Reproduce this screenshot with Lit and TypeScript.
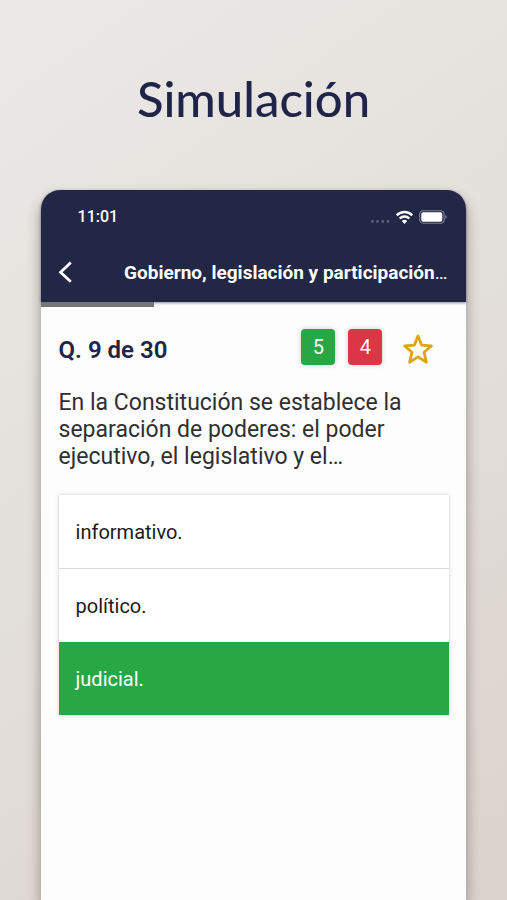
import { LitElement, html, css, svg } from "lit";
import { customElement, property, state } from "lit/decorators.js";
import { classMap } from "lit/directives/class-map.js";
import { styleMap } from "lit/directives/style-map.js";

@customElement("status-bar")
class StatusBar extends LitElement {
  static styles = css`
    :host {
      display: flex;
      align-items: center;
      justify-content: space-between;
      height: 54px;
      padding: 0 19px 0 37px;
      color: #fff;
      font: 500 16px/20px Roboto, "Liberation Sans", sans-serif;
    }
    .icons { display: flex; align-items: center; gap: 5px; }
    svg { display: block; }
  `;
  render() {
    return html`
      <time>11:01</time>
      <span class="icons">
        <svg width="20" height="14" viewBox="0 0 20 14" fill="#5c607c" aria-hidden="true">
          ${[2.4, 7.6, 12.8, 18].map((x) => svg`<circle cx=${x} cy="11.5" r="1.4" />`)}
        </svg>
        <svg width="19" height="14" viewBox="0 0 18 14" fill="none" stroke="#fff" stroke-width="2.4" aria-hidden="true">
          <path d="M1.2 5.3a11 11 0 0 1 15.6 0" />
          <path d="M4.2 8.5a6.8 6.8 0 0 1 9.6 0" />
          <path d="M9 13.9 6.3 11a3.9 3.9 0 0 1 5.4 0z" fill="#fff" stroke="none" />
        </svg>
        <svg width="28" height="14" viewBox="0 0 28 14" aria-hidden="true">
          <rect x="0.7" y="0.8" width="24.4" height="12.4" rx="3.4" fill="none" stroke="#7d8098" stroke-width="1.1" />
          <rect x="2.3" y="2.3" width="21" height="9.4" rx="1.8" fill="#fff" />
          <path d="M26.2 5v4q1.4-.6 1.4-2t-1.4-2z" fill="#7d8098" />
        </svg>
      </span>
    `;
  }
}

@customElement("answer-list")
class AnswerList extends LitElement {
  @property({ type: Array }) answers: string[] = [];
  @property({ type: Number }) correct = -1;

  static styles = css`
    ul {
      margin: 0;
      padding: 0;
      list-style: none;
      background: #fff;
      box-shadow: 0 0 4px rgba(0, 0, 0, 0.2);
    }
    li + li { border-top: 1px solid #dcdcdc; }
    li.right { border-top: 0; }
    button {
      display: block;
      width: 100%;
      padding: 25px 17px 24px;
      border: 0;
      background: none;
      color: #1b1b1b;
      font: 400 20px/24px Roboto, sans-serif;
      text-align: left;
      cursor: pointer;
    }
    .right button { background: #28a745; color: #fff; }
  `;
  render() {
    return html`<ul>
      ${this.answers.map(
        (a, i) => html`<li class=${classMap({ right: i === this.correct })}>
          <button type="button">${a}</button>
        </li>`
      )}
    </ul>`;
  }
}

@customElement("app-root")
class AppRoot extends LitElement {
  @state() private current = 9;
  @state() private total = 30;
  @state() private starred = false;

  static styles = css`
    :host {
      display: flex;
      flex-direction: column;
      box-sizing: border-box;
      min-height: 100vh;
      padding: 66px 8% 0;
      background: linear-gradient(145deg, #ebe9e6 0%, #e3dfdb 50%, #dbd3cd 100%);
      font-family: Roboto, sans-serif;
    }
    h1 {
      margin: 0 0 60px;
      color: #1f2448;
      font: 500 49px/64px Lato, sans-serif;
      text-align: center;
    }
    .phone {
      flex: 1;
      border-radius: 19px 19px 0 0;
      background: #fdfdfd;
      box-shadow: 0 8px 14px rgba(60, 50, 45, 0.45);
    }
    header {
      border-radius: 19px 19px 0 0;
      background: #222746;
      box-shadow: 0 1px 3px rgba(0, 0, 0, 0.45);
    }
    .bar {
      display: flex;
      align-items: center;
      justify-content: space-between;
      height: 58px;
      padding: 0 19px 0 12px;
      color: #fff;
    }
    button {
      display: block;
      padding: 0;
      border: 0;
      background: none;
      color: inherit;
      cursor: pointer;
    }
    svg { display: block; }
    h2 { margin: 0; font: 700 19px/24px Roboto, sans-serif; white-space: nowrap; }
    .more { font-weight: 400; }
    .track { height: 5px; }
    .fill { height: 5px; background: #767676; }
    main { padding: 22px 17px 24px 18px; }
    .row { display: flex; align-items: flex-start; gap: 13px; margin-bottom: 18px; }
    h3 { flex: 1; margin: 0; color: #20244a; font: 600 24px/42px Roboto, sans-serif; }
    .score {
      width: 34px;
      border-radius: 4px;
      color: #fff;
      font-size: 20px;
      line-height: 36px;
      text-align: center;
      box-shadow: 0 0 5px rgba(0, 0, 0, 0.2);
    }
    .good { background: #28a745; }
    .bad { background: #dc3545; }
    .star { margin: 4px 15px 0 7px; color: #dea50d; }
    .question { margin: 0 0 25px; color: #303030; font-size: 23px; line-height: 27px; }
  `;

  render() {
    const progress = ((this.current - 1) / this.total) * 100;
    return html`
      <h1>Simulación</h1>
      <section class="phone">
        <header>
          <status-bar></status-bar>
          <div class="bar">
            <button type="button" aria-label="Atrás">
              <svg width="24" height="24" viewBox="0 0 24 24" fill="none" stroke="currentColor" stroke-width="2.8">
                <path d="M17.8 1.6 7.6 11.2l10.2 9.6" />
              </svg>
            </button>
            <h2>Gobierno, legislación y participación<span class="more">…</span></h2>
          </div>
        </header>
        <div class="track"><div class="fill" style=${styleMap({ width: `${progress}%` })}></div></div>
        <main>
          <div class="row">
            <h3>Q. ${this.current} de ${this.total}</h3>
            <span class="score good">5</span>
            <span class="score bad">4</span>
            <button class="star" type="button" aria-label="Favorito" aria-pressed=${this.starred}
              @click=${() => (this.starred = !this.starred)}>
              <svg width="32" height="32" viewBox="0 0 32 32" fill=${this.starred ? "currentColor" : "none"}
                stroke="currentColor" stroke-width="2.8" stroke-linejoin="round">
                <path d="M16 3 19.7 12.2 29.4 13 22 19.2 24.4 29.2 16 23.9 7.6 29.2 10 19.2 2.6 13 12.3 12.2z" />
              </svg>
            </button>
          </div>
          <p class="question">En la Constitución se establece la separación de poderes: el poder ejecutivo, el legislativo y el…</p>
          <answer-list .answers=${["informativo.", "político.", "judicial."]} .correct=${2}></answer-list>
        </main>
      </section>
    `;
  }
}
